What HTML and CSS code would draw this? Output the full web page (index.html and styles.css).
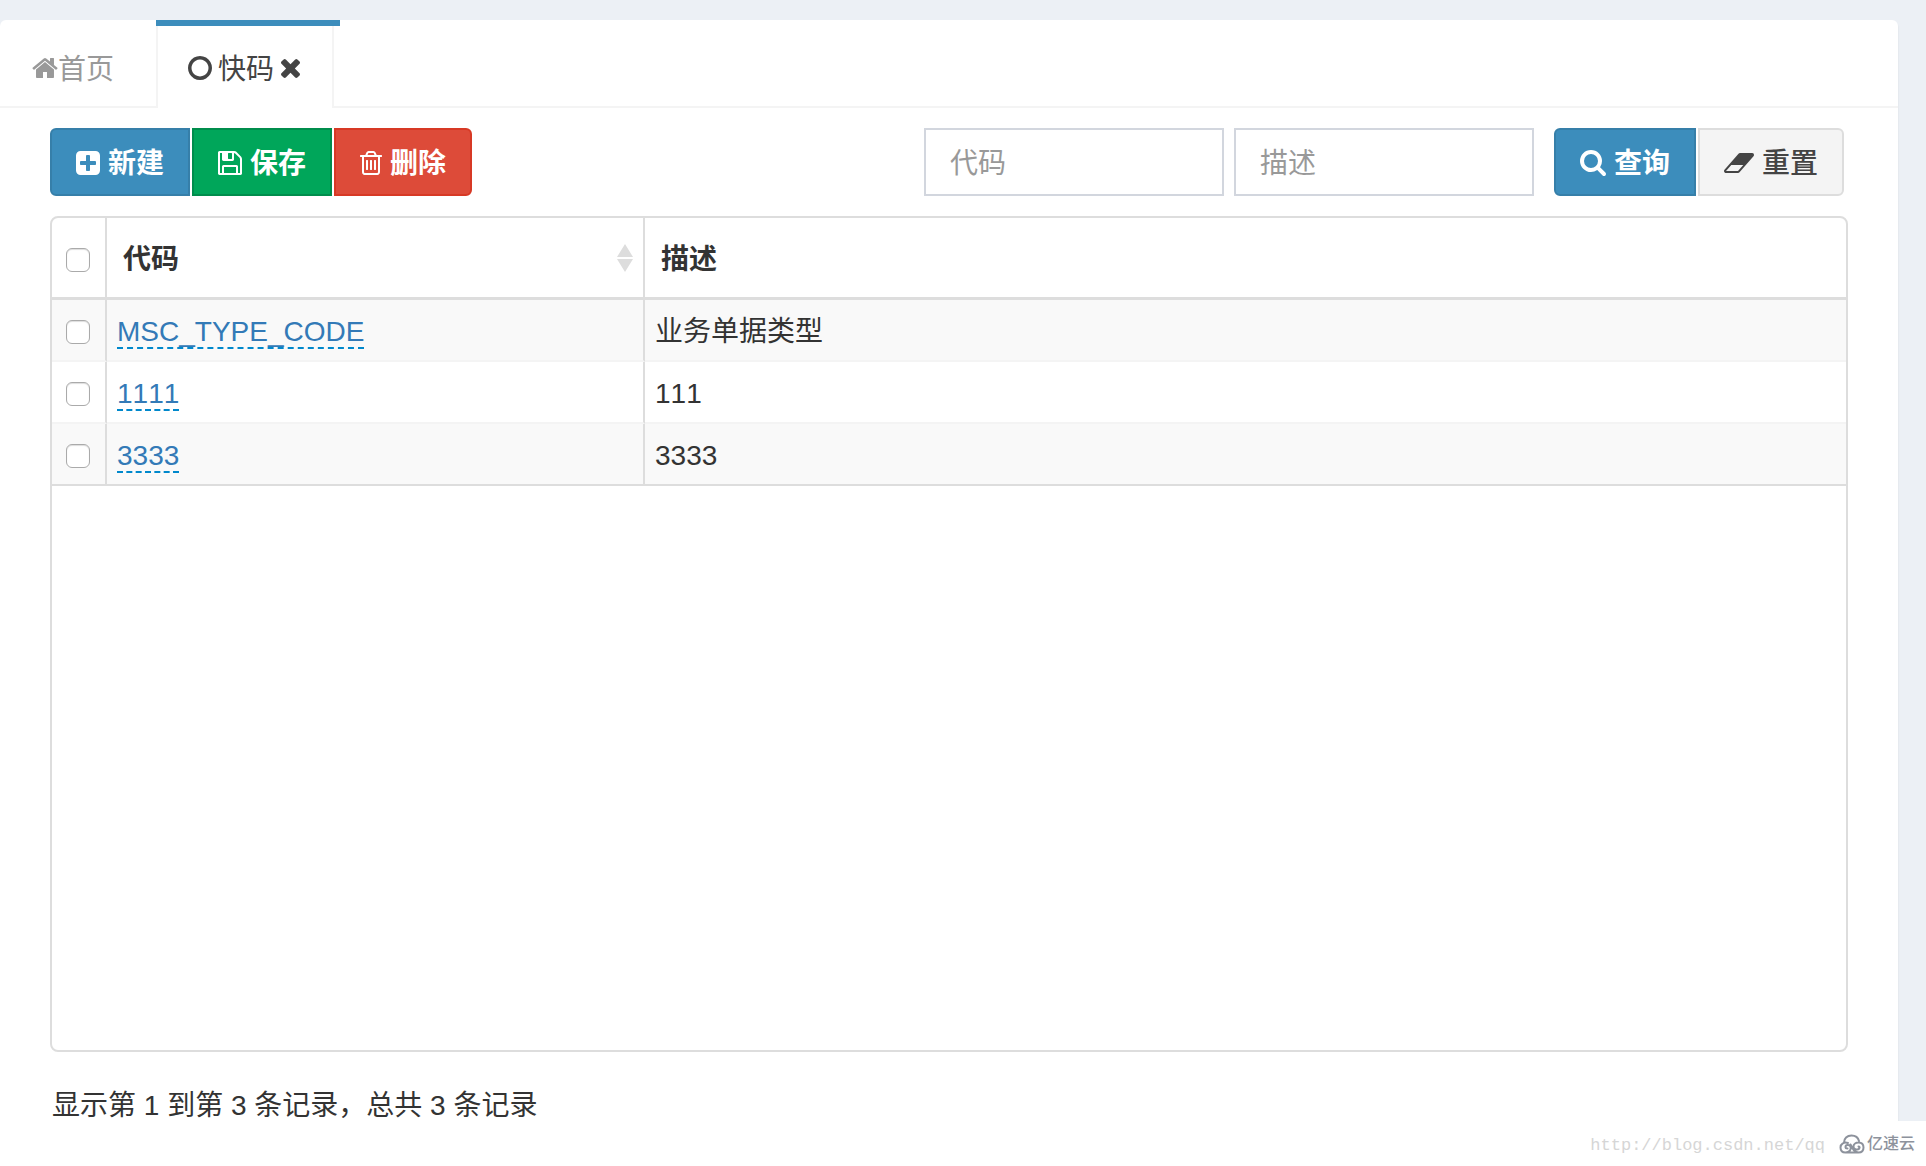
FILE: index.html
```html
<!DOCTYPE html>
<html lang="zh-CN">
<head>
<meta charset="utf-8">
<title>快码</title>
<link rel="stylesheet" href="styles.css">
</head>
<body>
<div class="shell">
  <main class="panel">
    <nav class="tabs">
      <a class="tab tab-home" href="#home"><svg class="icon" width="26" height="20" viewBox="64 253 1664 1283"><path d="M1472 992v480q0 26-19 45t-45 19h-384v-384h-256v384h-384q-26 0-45-19t-19-45v-480q0-1 .5-3t.5-3l575-474 575 474q1 2 1 6zm223-69l-62 74q-8 9-21 11h-3q-13 0-21-7l-692-577-692 577q-12 8-24 7-13-2-21-11l-62-74q-8-10-7-23.5t11-21.5l719-599q32-26 76-26t76 26l244 204v-195q0-14 9-23t23-9h192q14 0 23 9t9 23v408l219 182q10 8 11 21.5t-7 23.5z"/></svg><span class="label">首页</span></a>
      <div class="tab tab-active">
        <a class="tab-link" href="#code"><svg class="icon" width="24" height="24" viewBox="128 128 1536 1536"><path d="M896 352q-148 0-273 73t-198 198-73 273 73 273 198 198 273 73 273-73 198-198 73-273-73-273-198-198-273-73zm768 544q0 209-103 385.5t-279.5 279.5-385.5 103-385.5-103-279.5-279.5-103-385.5 103-385.5 279.5-279.5 385.5-103 385.5 103 279.5 279.5 103 385.5z"/></svg><span class="label">快码</span></a>
        <button class="tab-close" type="button" aria-label="关闭"><svg class="icon" width="19" height="19" viewBox="302 366 1188 1188"><path d="M1490 1322q0 40-28 68l-136 136q-28 28-68 28t-68-28l-294-294-294 294q-28 28-68 28t-68-28l-136-136q-28-28-28-68t28-68l294-294-294-294q-28-28-28-68t28-68l136-136q28-28 68-28t68 28l294 294 294-294q28-28 68-28t68 28l136 136q28 28 28 68t-28 68l-294 294 294 294q28 28 28 68z"/></svg></button>
      </div>
    </nav>

    <div class="content">
      <div class="toolbar">
        <div class="btn-group">
          <button class="btn btn-primary" type="button"><svg class="icon" width="24" height="24" viewBox="128 128 1536 1536"><path d="M1408 960v-128q0-26-19-45t-45-19h-320v-320q0-26-19-45t-45-19h-128q-26 0-45 19t-19 45v320h-320q-26 0-45 19t-19 45v128q0 26 19 45t45 19h320v320q0 26 19 45t45 19h128q26 0 45-19t19-45v-320h320q26 0 45-19t19-45zm256-544v960q0 119-84.5 203.5t-203.5 84.5h-960q-119 0-203.5-84.5t-84.5-203.5v-960q0-119 84.5-203.5t203.5-84.5h960q119 0 203.5 84.5t84.5 203.5z"/></svg><span class="label">新建</span></button>
          <button class="btn btn-success" type="button"><svg class="icon" width="24" height="24" viewBox="128 128 1536 1536"><path d="M512 1536h768v-384h-768v384zm896 0h128v-896q0-14-10-38.5t-20-34.5l-281-281q-10-10-34-20t-39-10v416q0 40-28 68t-68 28h-576q-40 0-68-28t-28-68v-416h-128v1280h128v-416q0-40 28-68t68-28h832q40 0 68 28t28 68v416zm-384-928v-320q0-13-9.5-22.5t-22.5-9.5h-192q-13 0-22.5 9.5t-9.5 22.5v320q0 13 9.5 22.5t22.5 9.5h192q13 0 22.5-9.5t9.5-22.5zm640 32v928q0 40-28 68t-68 28h-1344q-40 0-68-28t-28-68v-1344q0-40 28-68t68-28h928q40 0 88 20t76 48l280 280q28 28 48 76t20 88z"/></svg><span class="label">保存</span></button>
          <button class="btn btn-danger" type="button"><svg class="icon" width="22" height="24" viewBox="192 128 1408 1536"><path d="M704 736v576q0 14-9 23t-23 9h-64q-14 0-23-9t-9-23v-576q0-14 9-23t23-9h64q14 0 23 9t9 23zm256 0v576q0 14-9 23t-23 9h-64q-14 0-23-9t-9-23v-576q0-14 9-23t23-9h64q14 0 23 9t9 23zm256 0v576q0 14-9 23t-23 9h-64q-14 0-23-9t-9-23v-576q0-14 9-23t23-9h64q14 0 23 9t9 23zm128 724v-948h-896v948q0 22 7 40.5t14.5 27 10.5 8.5h832q3 0 10.5-8.5t14.5-27 7-40.5zm-672-1076h448l-48-117q-7-9-17-11h-317q-10 2-17 11zm928 32v64q0 14-9 23t-23 9h-96v948q0 83-47 143.5t-113 60.5h-832q-66 0-113-58.5t-47-141.5v-952h-96q-14 0-23-9t-9-23v-64q0-14 9-23t23-9h309l70-167q15-37 54-63t79-26h320q40 0 79 26t54 63l70 167h309q14 0 23 9t9 23z"/></svg><span class="label">删除</span></button>
        </div>
        <form class="search">
          <input class="field" type="text" placeholder="代码" aria-label="代码">
          <input class="field" type="text" placeholder="描述" aria-label="描述">
          <div class="btn-group search-actions">
            <button class="btn btn-primary" type="button"><svg class="icon" width="26" height="26" viewBox="64 128 1664 1664"><path d="M1216 832q0-185-131.5-316.5t-316.5-131.5-316.5 131.5-131.5 316.5 131.5 316.5 316.5 131.5 316.5-131.5 131.5-316.5zm512 832q0 52-38 90t-90 38q-54 0-90-38l-343-342q-179 124-399 124-143 0-273.5-55.5t-225-150-150-225-55.5-273.5 55.5-273.5 150-225 225-150 273.5-55.5 273.5 55.5 225 150 150 225 55.5 273.5q0 220-124 399l343 343q37 37 37 90z"/></svg><span class="label">查询</span></button>
            <button class="btn btn-default" type="reset"><svg class="icon" width="30" height="20" viewBox="-64 256 1920 1280"><path d="M832 1408l336-384h-768l-336 384h768zm1013-1077q15 34 9.500 71.500t-30.500 65.500l-896 1024q-38 44-96 44h-768q-38 0-69.500-20.500t-47.500-54.500q-15-34-9.500-71.500t30.500-65.500l896-1024q38-44 96-44h768q38 0 69.500 20.500t47.500 54.500z"/></svg><span class="label">重置</span></button>
          </div>
        </form>
      </div>

      <div class="grid">
        <table class="data">
          <thead>
            <tr>
              <th class="col-check" scope="col"><input class="check" type="checkbox" aria-label="全选"></th>
              <th class="col-code" scope="col"><div class="head"><span class="label">代码</span><svg width="16" height="30" viewBox="0 0 16 30" fill="#ddd"><path d="M8 1l8 13H0zM0 16h16L8 29z"/></svg></div></th>
              <th scope="col"><div class="head"><span class="label">描述</span></div></th>
            </tr>
          </thead>
          <tbody>
            <tr>
              <td class="col-check"><input class="check" type="checkbox" aria-label="选择 MSC_TYPE_CODE"></td>
              <td><a class="editable" href="#edit">MSC_TYPE_CODE</a></td>
              <td>业务单据类型</td>
            </tr>
            <tr>
              <td class="col-check"><input class="check" type="checkbox" aria-label="选择 1111"></td>
              <td><a class="editable" href="#edit">1111</a></td>
              <td>111</td>
            </tr>
            <tr>
              <td class="col-check"><input class="check" type="checkbox" aria-label="选择 3333"></td>
              <td><a class="editable" href="#edit">3333</a></td>
              <td>3333</td>
            </tr>
          </tbody>
        </table>
      </div>
      <p class="summary">显示第 1 到第 3 条记录，总共 3 条记录</p>
    </div>
  </main>
</div>
<footer class="credit">
  <span class="url">http://blog.csdn.net/qq</span>
  <span class="brand"><svg width="26" height="20" viewBox="0 0 26 20" fill="none" stroke="#8d929c" stroke-width="2" stroke-linecap="round"><path d="M20 7C19 3 16 1.500 12.500 1.500 8 1.500 5 4.500 5 8.500M9 9C5 7.500 1.500 10 1.500 13.500c0 3 2 5 5 5 4 0 6-3 5-6-1-2-5-2-5 .5 0 1 1 1.500 2 1.500M11.500 10.500c2 4 4 8 8 8 3 0 5-2 5-5s-2-5-5-5-5 2-5 4 2 3 4 3 3-3 1-3M7 18.500h12"/></svg>亿速云</span>
</footer>
</body>
</html>
```
FILE: styles.css
```css
* {
  box-sizing: border-box;
}

body {
  display: flex;
  flex-direction: column;
  min-height: 100vh;
  margin: 0;
  background: #fff;
  color: #333;
  font: 28px/40px "Liberation Sans", "Noto Sans CJK SC", sans-serif;
  font-kerning: none;
}

button,
input {
  font: inherit;
}

a {
  color: inherit;
  text-decoration: none;
}

.icon {
  flex: none;
  fill: currentColor;
}

.label {
  padding-top: 4px;
}

.shell {
  display: flex;
  flex: 1;
  overflow: hidden;
  padding: 20px 28px 0 0;
  background: #ecf0f5;
}

.panel {
  display: flex;
  flex: 1;
  flex-direction: column;
  border-radius: 6px 6px 0 0;
  background: #fff;
  box-shadow: 0 2px 2px rgba(0, 0, 0, 0.1);
}

/* Tabs */
.tabs {
  display: flex;
  height: 88px;
  border-bottom: 2px solid #f4f4f4;
}

.tab {
  display: flex;
  align-items: center;
  height: 88px;
  padding-top: 8px;
}

.tab-home {
  width: 156px;
  padding-left: 32px;
  color: #999;
}

.tab-active {
  position: relative;
  gap: 7px;
  padding-right: 32px;
  padding-left: 30px;
  border: solid #f4f4f4;
  border-width: 0 2px;
  background: #fff;
  color: #444;
}

.tab-active::before {
  position: absolute;
  top: 0;
  right: -8px;
  left: -2px;
  height: 6px;
  background: #3c8dbc;
  content: "";
}

.tab-link {
  display: flex;
  align-items: center;
  gap: 6px;
}

.tab-close {
  display: flex;
  padding: 0;
  border: 0;
  background: none;
  color: inherit;
}

/* Toolbar */
.content {
  display: flex;
  flex: 1;
  flex-direction: column;
  padding: 20px 50px 0;
}

.toolbar {
  display: flex;
  justify-content: space-between;
  margin-bottom: 20px;
}

.btn-group {
  display: flex;
  gap: 2px;
}

.btn {
  display: flex;
  align-items: center;
  gap: 8px;
  height: 68px;
  padding: 2px 24px 0;
  border: 2px solid;
  color: #fff;
  font-weight: 600;
}

.btn .label {
  padding-top: 2px;
}

.btn:first-child {
  border-radius: 6px 0 0 6px;
}

.btn:last-child {
  border-radius: 0 6px 6px 0;
}

.btn-primary {
  border-color: #367fa9;
  background: #3c8dbc;
}

.btn-success {
  border-color: #008d4c;
  background: #00a65a;
}

.btn-danger {
  border-color: #d73925;
  background: #dd4b39;
}

.btn-default {
  border-color: #ddd;
  background: #f4f4f4;
  color: #444;
  font-weight: 500;
}

.search {
  display: flex;
  gap: 10px;
  margin-right: 4px;
}

.search-actions {
  margin-left: 10px;
}

.field {
  width: 300px;
  height: 68px;
  padding: 4px 24px 0;
  border: 2px solid #d2d6de;
  border-radius: 0;
  background: #fff;
}

.field::placeholder {
  color: #999;
  opacity: 1;
}

/* Data grid */
.grid {
  flex: 1;
  overflow: hidden;
  border: 2px solid #ddd;
  border-radius: 8px;
}

.data {
  width: 100%;
  border-collapse: separate;
  border-spacing: 0;
  table-layout: fixed;
}

.data th,
.data td {
  height: 62px;
  padding: 4px 10px 0;
  border-right: 2px solid #ddd;
  border-bottom: 2px solid #f4f4f4;
  text-align: left;
}

.data th {
  height: 82px;
  padding: 0 10px 0 16px;
  border-bottom: 3px solid #ddd;
}

.data th:last-child,
.data td:last-child {
  border-right: 0;
}

.data tbody tr:nth-child(odd) {
  background: #f9f9f9;
}

.data tbody tr:last-child td {
  border-bottom-color: #ddd;
}

.data .col-check {
  width: 55px;
  padding: 4px 0 0 14px;
}

.data .col-code {
  width: 538px;
}

.head {
  display: flex;
  align-items: center;
  justify-content: space-between;
}

.check {
  display: block;
  width: 24px;
  height: 24px;
  margin: 0;
  border: 1px solid #aaa;
  border-radius: 6px;
  background: #fff;
  box-shadow: inset 0 1px 1px #ddd;
  appearance: none;
}

.editable {
  display: inline-block;
  border-bottom: 2px dashed #0088cc;
  color: #337ab7;
  line-height: 30px;
}

.summary {
  margin: 39px 0 0 2px;
  line-height: 30px;
}

.credit {
  display: flex;
  align-items: center;
  justify-content: flex-end;
  gap: 14px;
  height: 45px;
  padding-right: 11px;
}

.url {
  padding-top: 4px;
  color: #d6d6d6;
  font: 17px/24px "Liberation Mono", monospace;
}

.brand {
  display: flex;
  align-items: center;
  gap: 2px;
  color: #8d929c;
  font-size: 16px;
  font-weight: 500;
  line-height: 24px;
}
```
